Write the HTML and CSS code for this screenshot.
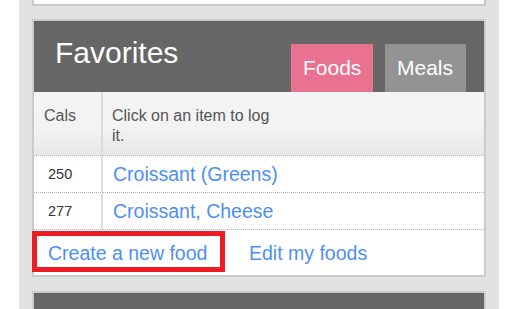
FILE: index.html
```html
<!DOCTYPE html>
<html lang="en">
<head>
<meta charset="utf-8">
<title>Favorites</title>
<link rel="stylesheet" href="styles.css">
</head>
<body>
<div class="column">
  <div class="card card-top"></div>

  <section class="card fav">
    <header class="fav-head">
      <h2 class="fav-title">Favorites</h2>
      <nav class="tabs">
        <span class="tab tab-foods">Foods</span>
        <span class="tab tab-meals">Meals</span>
      </nav>
    </header>

    <div class="fav-grid">
      <div class="cell cell-cals head">Cals</div>
      <div class="cell cell-name head"><span class="hint">Click on an item to log it.</span></div>

      <div class="cell cell-cals num">250</div>
      <div class="cell cell-name"><a class="link" href="#">Croissant (Greens)</a></div>

      <div class="cell cell-cals num">277</div>
      <div class="cell cell-name"><a class="link" href="#">Croissant, Cheese</a></div>
    </div>

    <footer class="fav-foot">
      <a class="link create" href="#">Create a new food</a>
      <a class="link edit" href="#">Edit my foods</a>
    </footer>
  </section>

  <section class="card next">
    <div class="next-head"></div>
  </section>
</div>
</body>
</html>
```
FILE: styles.css
```css
* { box-sizing: border-box; }

html, body {
  margin: 0;
  padding: 0;
  background: #ffffff;
  height: 309px;
  overflow: hidden;
  font-family: "Liberation Sans", Arial, sans-serif;
}

.column {
  margin-left: 19px;
  width: 480px;
  height: 309px;
  background: #e1e2e1;
  padding: 0 13px;
  display: flex;
  flex-direction: column;
}

.card {
  background: #ffffff;
  border: 2px solid #cbcbcb;
}

.card-top {
  border-top: none;
  height: 6px;
  margin-bottom: 13px;
}

/* Favorites header */
.fav-head {
  background: #666666;
  height: 71px;
  display: flex;
  justify-content: space-between;
  padding: 0 18px 0 21px;
}

.fav-title {
  margin: 0;
  padding-top: 14px;
  font-size: 30px;
  line-height: 36px;
  font-weight: normal;
  color: #ffffff;
}

.tabs {
  align-self: flex-end;
  display: flex;
  gap: 12px;
}

.tab {
  display: block;
  height: 48px;
  line-height: 48px;
  padding: 0 12px;
  font-size: 21px;
  color: #ffffff;
}

.tab-foods { background: #e8728f; width: 82px; }
.tab-meals { background: #939393; width: 81px; }

/* Grid */
.fav-grid {
  display: grid;
  grid-template-columns: 69px 1fr;
}

.cell {
  border-bottom: 1px dotted #b4b4b4;
  display: flex;
  align-items: center;
  height: 37px;
}

.cell-cals {
  border-right: 2px solid #dcdcdc;
}

.head {
  height: 64px;
  align-items: flex-start;
  padding-top: 14px;
  font-size: 16px;
  line-height: 20px;
  color: #555555;
  background: linear-gradient(#f4f4f4 0%, #f3f3f3 55%, #e8e8e8 100%);
}

.cell-cals.head { padding-left: 10px; }
.cell-name.head { padding-left: 9px; }

.hint {
  display: block;
  max-width: 172px;
}

.num {
  padding-left: 14px;
  font-size: 14.5px;
  color: #333333;
}

.cell-name { padding-left: 10px; }

.link {
  color: #4e8ff5;
  text-decoration: none;
  font-size: 19.5px;
}

/* Footer */
.fav-foot {
  height: 45px;
  display: flex;
  align-items: flex-start;
  padding-top: 1px;
}

.create {
  margin-left: -2px;
  height: 41px;
  line-height: 31px;
  padding: 2px 12px 0 11px;
  border: 5px solid #ed1c24;
  width: 193px;
}

.edit {
  margin-left: 24px;
  padding-top: 2px;
  line-height: 41px;
}

/* Next card */
.next {
  margin-top: 14px;
  border-bottom: none;
}

.next-head {
  background: #666666;
  height: 16px;
}
```
